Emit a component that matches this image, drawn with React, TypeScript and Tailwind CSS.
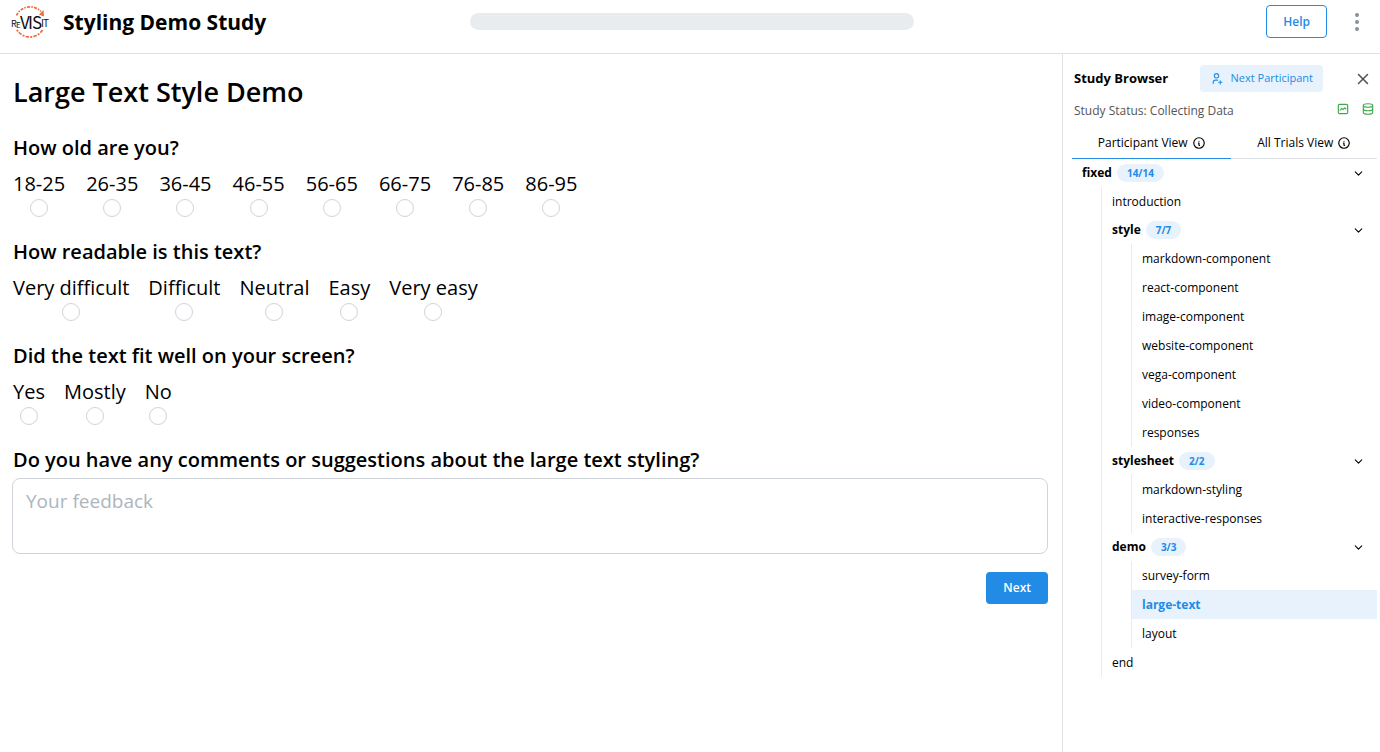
import { useState } from "react";
import {
  TbChevronDown,
  TbDatabase,
  TbDotsVertical,
  TbGraph,
  TbInfoCircle,
  TbUserPlus,
  TbX,
} from "react-icons/tb";
import { clsx } from "clsx";

type TreeNode = {
  name: string;
  count?: string;
  children?: TreeNode[];
};

const SEQUENCE: TreeNode = {
  name: "fixed",
  count: "14/14",
  children: [
    { name: "introduction" },
    {
      name: "style",
      count: "7/7",
      children: [
        { name: "markdown-component" },
        { name: "react-component" },
        { name: "image-component" },
        { name: "website-component" },
        { name: "vega-component" },
        { name: "video-component" },
        { name: "responses" },
      ],
    },
    {
      name: "stylesheet",
      count: "2/2",
      children: [{ name: "markdown-styling" }, { name: "interactive-responses" }],
    },
    {
      name: "demo",
      count: "3/3",
      children: [{ name: "survey-form" }, { name: "large-text" }, { name: "layout" }],
    },
    { name: "end" },
  ],
};

type Question = {
  id: string;
  prompt: string;
  options: string[];
  numeric?: boolean;
};

const QUESTIONS: Question[] = [
  {
    id: "age",
    prompt: "How old are you?",
    options: ["18-25", "26-35", "36-45", "46-55", "56-65", "66-75", "76-85", "86-95"],
    numeric: true,
  },
  {
    id: "readable",
    prompt: "How readable is this text?",
    options: ["Very difficult", "Difficult", "Neutral", "Easy", "Very easy"],
  },
  {
    id: "fit",
    prompt: "Did the text fit well on your screen?",
    options: ["Yes", "Mostly", "No"],
  },
];

function Logo() {
  return (
    <svg viewBox="0 0 40 40" className="w-10 h-10 shrink-0" role="img" aria-label="reVISit">
      <g fill="none" stroke="#f4683f" strokeWidth="1.7">
        <path d="M6.5 13.5 A15 15 0 0 1 31 9.5" strokeDasharray="3 1.2 1.5 1.2" />
        <path d="M32.5 28 A15 15 0 0 1 6.5 27" strokeDasharray="3.5 1.2 2 1.2" />
      </g>
      <path d="M29 12.5 L33.5 8 L34 14.5 Z" fill="#f4683f" />
      <g fill="#111" fontFamily="'Noto Sans CJK SC', sans-serif" fontWeight="400">
        <text x="1" y="25" fontSize="9">R</text>
        <text x="6" y="26" fontSize="8">E</text>
        <text x="10" y="27" fontSize="17">V</text>
        <text x="18" y="27" fontSize="17">I</text>
        <text x="22" y="27" fontSize="17">S</text>
        <text x="31" y="25" fontSize="10">I</text>
        <text x="33" y="25" fontSize="10">T</text>
      </g>
    </svg>
  );
}

function Header() {
  return (
    <header className="flex items-center justify-between h-[54px] pb-[10px] pl-[10px] pr-[6px] border-b border-[#dee2e6]">
      <div className="flex flex-1 items-center gap-[13px]">
        <Logo />
        <h1 className="pt-[2px] text-[21px] font-bold whitespace-nowrap">Styling Demo Study</h1>
      </div>
      <div
        role="progressbar"
        aria-label="Study progress"
        aria-valuenow={0}
        className="w-[32.5%] h-[17px] rounded-full bg-[#e9ecef]"
      />
      <div className="flex flex-1 items-center justify-end gap-[18px]">
        <button className="h-[33px] px-4 rounded border border-[#228be6] text-[12px] font-semibold text-[#228be6]">
          Help
        </button>
        <button aria-label="Menu" className="mr-[5px] text-[#868e96]">
          <TbDotsVertical className="w-6 h-6" />
        </button>
      </div>
    </header>
  );
}

function RadioQuestion({ id, prompt, options, numeric }: Question) {
  return (
    <fieldset className="mb-[17px] pl-px">
      <legend className="text-[20px] leading-9 font-semibold">{prompt}</legend>
      <div className={clsx("flex", numeric ? "gap-[21px]" : "gap-[19px]")}>
        {options.map((option) => (
          <label key={option} className="flex flex-col items-center text-[20px] leading-9">
            {option}
            <input
              type="radio"
              name={id}
              value={option}
              className="appearance-none w-[18px] h-[18px] -mt-[3px] rounded-full border border-[#ced4da] bg-white checked:border-[5px] checked:border-[#228be6]"
            />
          </label>
        ))}
      </div>
    </fieldset>
  );
}

function TreeItem({
  node,
  selected,
  onSelect,
}: {
  node: TreeNode;
  selected: string;
  onSelect: (name: string) => void;
}) {
  const [open, setOpen] = useState(true);

  if (!node.children) {
    const active = node.name === selected;
    return (
      <li>
        <button
          onClick={() => onSelect(node.name)}
          className={clsx(
            "flex items-center w-full h-[29px] pl-[10px] text-left",
            active ? "bg-[#e7f2fc] font-bold text-[#228be6]" : "hover:bg-gray-50"
          )}
        >
          {node.name}
        </button>
      </li>
    );
  }

  return (
    <li>
      <button
        onClick={() => setOpen(!open)}
        aria-expanded={open}
        className="flex items-center w-full h-7 pl-[10px] pr-3 text-left"
      >
        <span className="font-bold">{node.name}</span>
        <span className="ml-[5px] h-[18px] px-[10px] rounded-full bg-[#e7f2fc] text-[10px] leading-[18px] font-bold text-[#228be6]">
          {node.count}
        </span>
        <TbChevronDown className="ml-auto w-[13px] h-[13px]" />
      </button>
      {open && (
        <ul className="ml-[29px] border-l border-[#e9ecef]">
          {node.children.map((child) => (
            <TreeItem key={child.name} node={child} selected={selected} onSelect={onSelect} />
          ))}
        </ul>
      )}
    </li>
  );
}

function StudyBrowser() {
  const [view, setView] = useState("Participant View");
  const [selected, setSelected] = useState("large-text");

  return (
    <aside className="w-[318px] shrink-0 pl-[9px] pr-[3px] border-l border-[#dee2e6] text-[12px]">
      <div className="flex items-center pt-[11px] pl-[2px] pr-[5px]">
        <h2 className="text-[13px] font-bold">Study Browser</h2>
        <button className="flex items-center gap-2 h-[27px] ml-auto mr-[31px] px-[10px] rounded bg-[#e7f2fc] text-[11px] font-medium text-[#228be6]">
          <TbUserPlus className="w-[13px] h-[13px]" />
          Next Participant
        </button>
        <button aria-label="Close" className="text-[#495057]">
          <TbX className="w-[18px] h-[18px]" />
        </button>
      </div>
      <div className="flex items-center h-[37px] pl-[2px] pr-[2px] text-[#555]">
        <p>Study Status: Collecting Data</p>
        <div className="flex gap-[11px] ml-auto pb-1 text-[#40a94c]">
          <TbGraph className="w-[14px] h-[14px]" />
          <TbDatabase className="w-[14px] h-[14px]" />
        </div>
      </div>
      <div role="tablist" className="flex h-[30px]">
        {["Participant View", "All Trials View"].map((tab) => (
          <button
            key={tab}
            role="tab"
            aria-selected={view === tab}
            onClick={() => setView(tab)}
            className={clsx(
              "flex grow items-center justify-center gap-1 pb-[2px] border-b",
              view === tab ? "border-[#228be6]" : "border-[#dee2e6]"
            )}
          >
            {tab}
            <TbInfoCircle className="w-[14px] h-[14px]" />
          </button>
        ))}
      </div>
      <ul>
        <TreeItem node={SEQUENCE} selected={selected} onSelect={setSelected} />
      </ul>
    </aside>
  );
}

export default function App() {
  return (
    <div className="flex flex-col min-h-screen bg-white text-black font-['Segoe_UI','Open_Sans',sans-serif]">
      <Header />
      <div className="flex grow">
        <main className="grow min-w-0 pt-4 pl-3 pr-[14px]">
          <h2 className="mb-[17px] pl-px text-[27px] leading-[43px] font-semibold">Large Text Style Demo</h2>
          {QUESTIONS.map((q) => (
            <RadioQuestion key={q.id} {...q} />
          ))}
          <label htmlFor="comments" className="block pl-px text-[20px] leading-9 font-semibold">
            Do you have any comments or suggestions about the large text styling?
          </label>
          <textarea
            id="comments"
            placeholder="Your feedback"
            className="block w-full h-[76px] px-[13px] py-2 rounded-lg border border-[#ced4da] text-[19px] placeholder:text-[#adb5bd] resize-none"
          />
          <div className="flex justify-end mt-[18px]">
            <button className="h-8 px-[17px] rounded bg-[#228be6] text-[12px] font-semibold text-white">
              Next
            </button>
          </div>
        </main>
        <StudyBrowser />
      </div>
    </div>
  );
}
